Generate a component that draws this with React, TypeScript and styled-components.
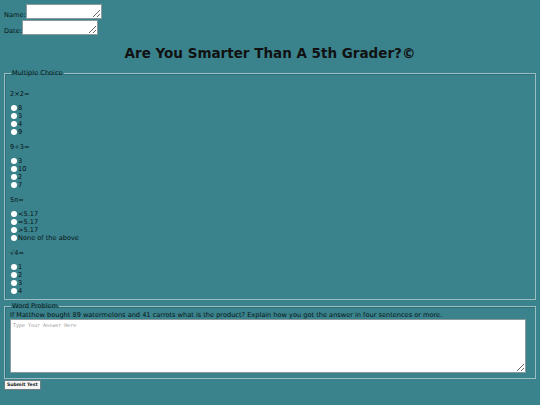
import React from "react";
import styled, { createGlobalStyle } from "styled-components";

const GlobalStyle = createGlobalStyle`
  html, body {
    margin: 0;
    padding: 0;
    background: #3a838d;
  }
  body {
    padding: 3px 4px;
    font-family: "DejaVu Sans", Verdana, sans-serif;
    font-size: 6.6px;
    line-height: 8px;
    color: #081315;
  }
`;

const Page = styled.form`
  display: flex;
  flex-direction: column;
`;

const InfoRow = styled.label`
  display: flex;
  align-items: flex-end;
  height: 16px;
`;

const InfoInput = styled.textarea`
  width: 76px;
  height: 15px;
  box-sizing: border-box;
  margin: 0;
  padding: 1px;
  border: 1px solid #8a9a9c;
  background: #ffffff;
  font-size: 7px;
  resize: both;
`;

const Title = styled.h1`
  margin: 9px 0 7px;
  text-align: center;
  font-size: 13.5px;
  line-height: 18px;
  font-weight: bold;
  color: #111111;
`;

const Section = styled.fieldset<{ $compact?: boolean }>`
  margin: 0 0 ${(p) => (p.$compact ? "0" : "2px")};
  padding: ${(p) => (p.$compact ? "1px 5px 5px" : "13px 5px 4px")};
  border: 1px solid #9cbdc2;
  box-shadow: inset 1px 1px 0 #2f6f78;
  min-width: 0;
`;

const Legend = styled.legend`
  padding: 0 1px;
  margin-left: 1px;
  font-size: 6.6px;
  line-height: 8px;
`;

const Question = styled.p`
  margin: 0 0 6px;
`;

const Choices = styled.div`
  display: flex;
  flex-direction: column;
  margin-bottom: 7px;

  &:last-child {
    margin-bottom: 0;
  }
`;

const Choice = styled.label`
  display: flex;
  align-items: center;
  height: 8px;
`;

const Radio = styled.input`
  appearance: none;
  width: 6px;
  height: 6px;
  margin: 0 1px 0 1px;
  border-radius: 50%;
  background: #ffffff;
  border: none;
`;

const Prompt = styled.div`
  margin: 0;
`;

const Answer = styled.textarea`
  display: block;
  box-sizing: border-box;
  width: 516px;
  height: 54px;
  margin: 0;
  padding: 2px;
  border: 1px solid #8a9a9c;
  background: #ffffff;
  font-family: "DejaVu Sans Mono", monospace;
  font-size: 5px;
  resize: both;

  &::placeholder {
    color: #9a9a9a;
  }
`;

const SubmitButton = styled.button`
  align-self: flex-start;
  height: 10px;
  padding: 0 2px;
  margin: 1px 0 0;
  border: 1px solid #6f7d80;
  border-radius: 1px;
  background: #f4f4f4;
  font-family: "DejaVu Sans", Verdana, sans-serif;
  font-size: 4.6px;
  font-weight: bold;
  line-height: 8px;
  color: #222222;
`;

const questions = [
  { name: "q1", text: "2×2=", options: ["8", "3", "4", "9"] },
  { name: "q2", text: "9÷3=", options: ["3", "10", "2", "7"] },
  { name: "q3", text: "5π=", options: ["<5.17", "=5.17", ">5.17", "None of the above"] },
  { name: "q4", text: "√4=", options: ["1", "2", "3", "4"] },
];

export default function App() {
  return (
    <>
      <GlobalStyle />
      <Page onSubmit={(e) => e.preventDefault()}>
        <InfoRow>
          Name:<InfoInput />
        </InfoRow>
        <InfoRow>
          Date:<InfoInput />
        </InfoRow>
        <Title>Are You Smarter Than A 5th Grader?©</Title>
        <Section>
          <Legend>Multiple Choice</Legend>
          {questions.map((q) => (
            <React.Fragment key={q.name}>
              <Question>{q.text}</Question>
              <Choices>
                {q.options.map((o) => (
                  <Choice key={o}>
                    <Radio type="radio" name={q.name} value={o} />
                    {o}
                  </Choice>
                ))}
              </Choices>
            </React.Fragment>
          ))}
        </Section>
        <Section $compact>
          <Legend>Word Problem</Legend>
          <Prompt>
            If Matthew bought 89 watermelons and 41 carrots what is the product? Explain how you got
            the answer in four sentences or more.
          </Prompt>
          <Answer placeholder="Type Your Answer Here" />
        </Section>
        <SubmitButton type="submit">Submit Test</SubmitButton>
      </Page>
    </>
  );
}
